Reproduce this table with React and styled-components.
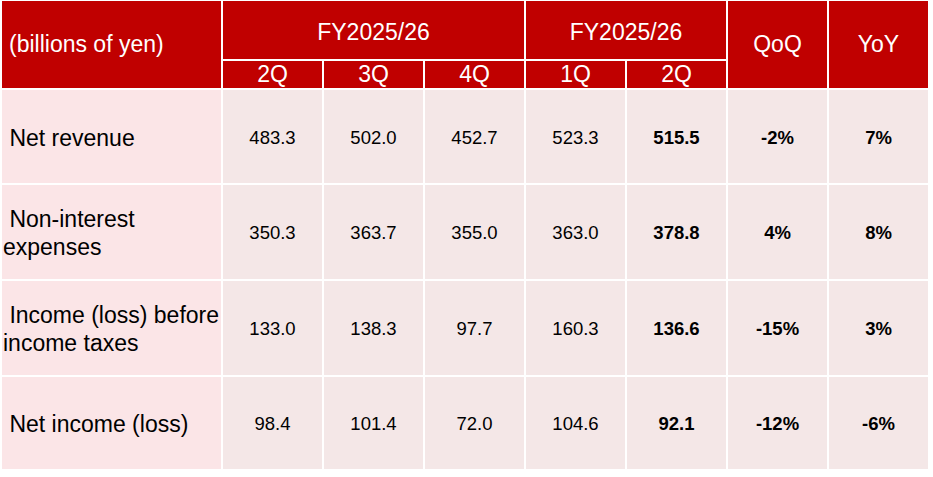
import styled, { createGlobalStyle } from "styled-components";

const rows = [
    { label: " Net revenue", values: ["483.3", "502.0", "452.7", "523.3", "515.5", "-2%", "7%"] },
    { label: " Non-interest expenses", values: ["350.3", "363.7", "355.0", "363.0", "378.8", "4%", "8%"] },
    { label: " Income (loss) before income taxes", values: ["133.0", "138.3", "97.7", "160.3", "136.6", "-15%", "3%"] },
    { label: " Net income (loss)", values: ["98.4", "101.4", "72.0", "104.6", "92.1", "-12%", "-6%"] },
];

export default function App() {
    return (
        <>
            <Global />
            <Table>
                <Head $col="1" $row="1 / 3" $left>(billions of yen)</Head>
                <Head $col="2 / 5" $row="1" $up>FY2025/26</Head>
                <Head $col="5 / 7" $row="1" $up>FY2025/26</Head>
                <Head $col="7" $row="1 / 3">QoQ</Head>
                <Head $col="8" $row="1 / 3">YoY</Head>
                <Head $col="2" $row="2">2Q</Head>
                <Head $col="3" $row="2">3Q</Head>
                <Head $col="4" $row="2">4Q</Head>
                <Head $col="5" $row="2">1Q</Head>
                <Head $col="6" $row="2">2Q</Head>
                {rows.map(r => (
                    <Row key={r.label}>
                        <Label>{r.label}</Label>
                        {r.values.map((v, i) => (
                            <Value key={i} $bold={i >= 4}>{v}</Value>
                        ))}
                    </Row>
                ))}
            </Table>
        </>
    );
}

const Global = createGlobalStyle`
    body {
        margin: 0;
        background: #ffffff;
        font-family: "Liberation Sans", Arial, sans-serif;
    }
`
const Table = styled.div`
    display: grid;
    grid-template-columns: 219px repeat(7, 99px);
    grid-template-rows: 58px 27px 93px 94px 94px 92px;
    gap: 2px;
    padding: 1px 0 0 2px;
    width: max-content;
`
const Head = styled.div`
    grid-column: ${p => p.$col};
    grid-row: ${p => p.$row};
    background-color: #c00000;
    color: #ffffff;
    font-size: 23px;
    display: flex;
    align-items: ${p => p.$up ? "flex-end" : "center"};
    padding-bottom: ${p => p.$up ? "13px" : "0"};
    justify-content: ${p => p.$left ? "flex-start" : "center"};
    padding-left: ${p => p.$left ? "7px" : "0"};
    box-sizing: border-box;
    white-space: nowrap;
`
const Row = styled.div`
    display: contents;
`
const Label = styled.div`
    background-color: #fbe5e7;
    color: #000000;
    font-size: 23px;
    line-height: 28px;
    white-space: pre-wrap;
    display: flex;
    align-items: center;
    padding: 2px 0 0 1px;
`
const Value = styled.div`
    background-color: #f4e7e7;
    color: #000000;
    font-size: 18.5px;
    font-weight: ${p => p.$bold ? 700 : 400};
    display: flex;
    align-items: center;
    justify-content: center;
    padding-top: 2px;
`
